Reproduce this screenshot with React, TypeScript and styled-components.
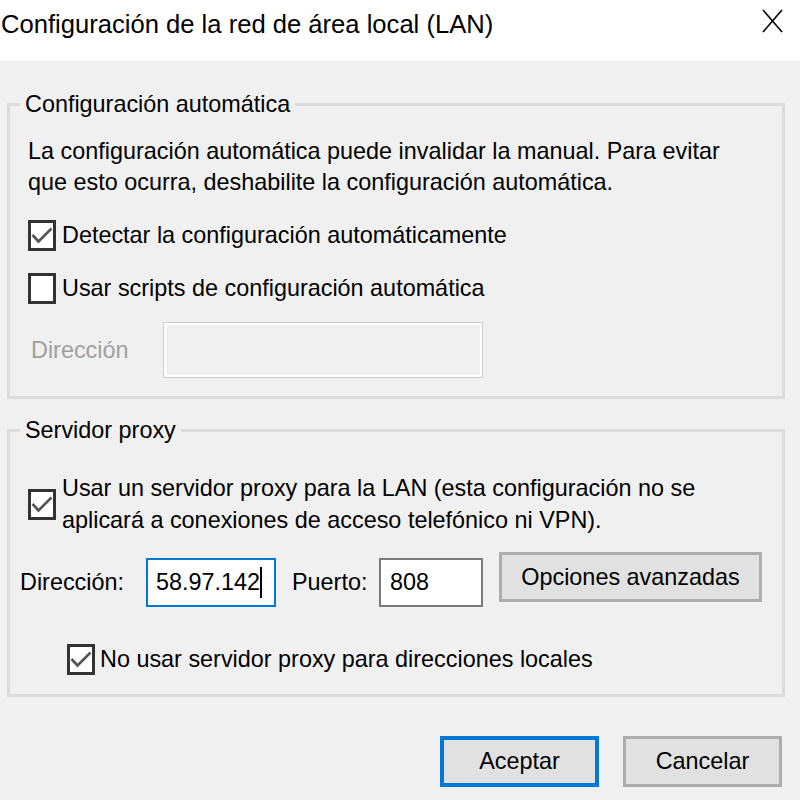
import React from 'react';
import styled, { createGlobalStyle } from 'styled-components';

const Global = createGlobalStyle`
  html, body { margin: 0; padding: 0; background: #f0f0f0; }
  body { font-family: "Liberation Sans", Arial, sans-serif; color: #000; }
  * { box-sizing: border-box; }
`;

const FS = 23.4;

const Window = styled.div`
  width: 800px;
  height: 800px;
  background: #f0f0f0;
  display: flex;
  flex-direction: column;
  overflow: hidden;
`;

const TitleBar = styled.div`
  height: 61px;
  flex: none;
  background: #fff;
  display: flex;
  justify-content: space-between;
  align-items: flex-start;
`;

const Title = styled.div`
  font-size: 25.6px;
  line-height: 30px;
  margin-top: 9px;
  padding-left: 1px;
  white-space: nowrap;
`;

const CloseIcon = styled.svg`
  margin: 9px 17px 0 0;
  flex: none;
`;

const Body = styled.div`
  flex: 1;
  padding: 29px 15px 0 7px;
  display: flex;
  flex-direction: column;
`;

const Group = styled.fieldset<{ $pt: number; $pb: number }>`
  margin: 0;
  min-width: 0;
  border: 3px solid #dcdcdc;
  padding: ${p => p.$pt}px 18px ${p => p.$pb}px 18px;
  display: flex;
  flex-direction: column;
  & + & { margin-top: 17px; }
`;

const Legend = styled.legend`
  font-size: ${FS}px;
  line-height: 28px;
  padding: 0 5px;
  margin-left: -8px;
`;

const Paragraph = styled.p`
  margin: 0;
  font-size: ${FS}px;
  line-height: 31px;
  white-space: nowrap;
`;

const CheckRow = styled.div<{ $mt: number; $ml?: number; $gap?: number }>`
  display: flex;
  align-items: center;
  gap: ${p => p.$gap ?? 6}px;
  margin-top: ${p => p.$mt}px;
  margin-left: ${p => p.$ml ?? 0}px;
`;

const Box = styled.div`
  width: 28px;
  height: 31px;
  flex: none;
  border: 3px solid #333;
  background: #fff;
  display: flex;
  align-items: center;
  justify-content: center;
`;

const Label = styled.span<{ $lh?: number }>`
  font-size: ${FS}px;
  line-height: ${p => p.$lh ?? 31}px;
  white-space: nowrap;
`;

const FieldRow = styled.div<{ $mt: number }>`
  display: flex;
  align-items: flex-start;
  margin-top: ${p => p.$mt}px;
`;

const Fields = styled.div<{ $mt?: number }>`
  display: flex;
  align-items: center;
  margin-top: ${p => p.$mt ?? 6}px;
`;

const FieldLabel = styled.span<{ $w: number; $ml?: number; $disabled?: boolean }>`
  font-size: ${FS}px;
  line-height: 31px;
  width: ${p => p.$w}px;
  margin-left: ${p => p.$ml ?? 0}px;
  flex: none;
  white-space: nowrap;
  color: ${p => (p.$disabled ? '#a0a0a0' : '#000')};
`;

const DisabledInput = styled.div`
  width: 320px;
  height: 56px;
  border: 1px solid #cccccc;
  box-shadow: inset 0 0 0 2px #ffffff;
  background: #f0f0f0;
`;

const TextInput = styled.div<{ $w: number; $focused?: boolean }>`
  width: ${p => p.$w}px;
  height: 49px;
  flex: none;
  background: #fff;
  border: 2px solid ${p => (p.$focused ? '#0078d7' : '#7a7a7a')};
  display: flex;
  align-items: center;
  justify-content: ${p => (p.$focused ? 'flex-end' : 'flex-start')};
  padding: 0 ${p => (p.$focused ? 12 : 9)}px 0 ${p => (p.$focused ? 4 : 9)}px;
  overflow: hidden;
  font-size: ${FS}px;
  white-space: nowrap;
`;

const Clip = styled.div`
  overflow: hidden;
  display: flex;
  justify-content: flex-end;
  align-items: center;
  width: 100%;
`;

const Caret = styled.span`
  display: inline-block;
  width: 2px;
  height: 31px;
  background: #000;
  margin-left: 0px;
  flex: none;
`;

const Button = styled.button<{ $w: number; $h: number; $primary?: boolean }>`
  width: ${p => p.$w}px;
  height: ${p => p.$h}px;
  flex: none;
  background: #e1e1e1;
  border: ${p => (p.$primary ? '4px solid #0078d7' : '3px solid #adadad')};
  font-family: "Liberation Sans", Arial, sans-serif;
  font-size: ${FS}px;
  color: #000;
  padding: 0;
  display: flex;
  align-items: center;
  justify-content: center;
`;

const Gap = styled.div<{ $w: number }>`
  width: ${p => p.$w}px;
  flex: none;
`;

const Footer = styled.div`
  display: flex;
  justify-content: flex-end;
  gap: 24px;
  margin-top: 39px;
  padding-right: 3px;
`;

const Check = ({ on }: { on: boolean }) => (
  <Box>
    {on && (
      <svg width="22" height="25" viewBox="0 0 22 25">
        <path d="M1.5 12 L7.5 18.5 L20.5 5.5" fill="none" stroke="#555" strokeWidth="2.6" />
      </svg>
    )}
  </Box>
);

export default function App() {
  return (
    <>
      <Global />
      <Window>
        <TitleBar>
          <Title>Configuración de la red de área local (LAN)</Title>
          <CloseIcon width="21" height="24" viewBox="0 0 21 24">
            <path d="M1 1 L20 23 M20 1 L1 23" stroke="#000" strokeWidth="1.6" fill="none" />
          </CloseIcon>
        </TitleBar>
        <Body>
          <Group $pt={18} $pb={18}>
            <Legend>Configuración automática</Legend>
            <Paragraph>
              La configuración automática puede invalidar la manual. Para evitar
              <br />
              que esto ocurra, deshabilite la configuración automática.
            </Paragraph>
            <CheckRow $mt={22}>
              <Check on />
              <Label>Detectar la configuración automáticamente</Label>
            </CheckRow>
            <CheckRow $mt={22}>
              <Check on={false} />
              <Label>Usar scripts de configuración automática</Label>
            </CheckRow>
            <FieldRow $mt={18}>
              <Fields $mt={0}>
                <FieldLabel $w={132} $ml={3} $disabled>
                  Dirección
                </FieldLabel>
                <DisabledInput />
              </Fields>
            </FieldRow>
          </Group>
          <Group $pt={28} $pb={19}>
            <Legend>Servidor proxy</Legend>
            <CheckRow $mt={0}>
              <Check on />
              <Label $lh={32}>
                Usar un servidor proxy para la LAN (esta configuración no se
                <br />
                aplicará a conexiones de acceso telefónico ni VPN).
              </Label>
            </CheckRow>
            <FieldRow $mt={16}>
              <Fields>
                <FieldLabel $w={126} $ml={-8}>
                  Dirección:
                </FieldLabel>
                <TextInput $w={130} $focused>
                  <Clip>
                    <span>58.97.142</span>
                    <Caret />
                  </Clip>
                </TextInput>
                <Gap $w={16} />
                <FieldLabel $w={87}>Puerto:</FieldLabel>
                <TextInput $w={104}>808</TextInput>
              </Fields>
              <Gap $w={16} />
              <Button $w={263} $h={50}>
                Opciones avanzadas
              </Button>
            </FieldRow>
            <CheckRow $mt={37} $ml={39} $gap={5}>
              <Check on />
              <Label>No usar servidor proxy para direcciones locales</Label>
            </CheckRow>
          </Group>
          <Footer>
            <Button $w={159} $h={51} $primary>
              Aceptar
            </Button>
            <Button $w={159} $h={51}>
              Cancelar
            </Button>
          </Footer>
        </Body>
      </Window>
    </>
  );
}
